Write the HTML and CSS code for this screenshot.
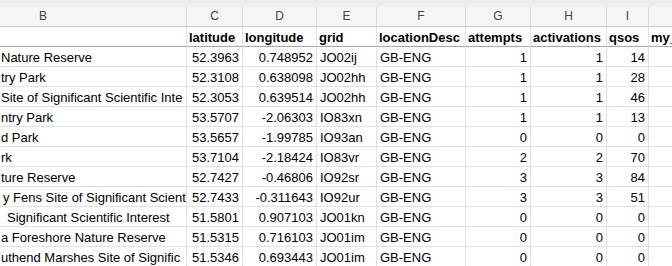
FILE: index.html
```html
<!DOCTYPE html>
<html>
	<head>
		<meta charset="UTF-8">
		<title>parks</title>
		<link rel="stylesheet" href="styles.css">
	</head>
	<body>
		<div class="topbar"></div>
		<div class="sheet">
			<!-- column letters -->
			<div class="col colb">B</div>
			<div class="col">C</div>
			<div class="col">D</div>
			<div class="col">E</div>
			<div class="col">F</div>
			<div class="col">G</div>
			<div class="col">H</div>
			<div class="col">I</div>
			<div class="col last"></div>

			<!-- header row -->
			<div class="cell head name"></div>
			<div class="cell head">latitude</div>
			<div class="cell head">longitude</div>
			<div class="cell head">grid</div>
			<div class="cell head">locationDesc</div>
			<div class="cell head">attempts</div>
			<div class="cell head">activations</div>
			<div class="cell head">qsos</div>
			<div class="cell head last">my_</div>

			<div class="cell name">Nature Reserve</div>
			<div class="cell num">52.3963</div>
			<div class="cell num">0.748952</div>
			<div class="cell">JO02ij</div>
			<div class="cell">GB-ENG</div>
			<div class="cell num">1</div>
			<div class="cell num">1</div>
			<div class="cell num">14</div>
			<div class="cell last"></div>

			<div class="cell name">try Park</div>
			<div class="cell num">52.3108</div>
			<div class="cell num">0.638098</div>
			<div class="cell">JO02hh</div>
			<div class="cell">GB-ENG</div>
			<div class="cell num">1</div>
			<div class="cell num">1</div>
			<div class="cell num">28</div>
			<div class="cell last"></div>

			<div class="cell name">Site of Significant Scientific Inte</div>
			<div class="cell num">52.3053</div>
			<div class="cell num">0.639514</div>
			<div class="cell">JO02hh</div>
			<div class="cell">GB-ENG</div>
			<div class="cell num">1</div>
			<div class="cell num">1</div>
			<div class="cell num">46</div>
			<div class="cell last"></div>

			<div class="cell name">ntry Park</div>
			<div class="cell num">53.5707</div>
			<div class="cell num">-2.06303</div>
			<div class="cell">IO83xn</div>
			<div class="cell">GB-ENG</div>
			<div class="cell num">1</div>
			<div class="cell num">1</div>
			<div class="cell num">13</div>
			<div class="cell last"></div>

			<div class="cell name">d Park</div>
			<div class="cell num">53.5657</div>
			<div class="cell num">-1.99785</div>
			<div class="cell">IO93an</div>
			<div class="cell">GB-ENG</div>
			<div class="cell num">0</div>
			<div class="cell num">0</div>
			<div class="cell num">0</div>
			<div class="cell last"></div>

			<div class="cell name">rk</div>
			<div class="cell num">53.7104</div>
			<div class="cell num">-2.18424</div>
			<div class="cell">IO83vr</div>
			<div class="cell">GB-ENG</div>
			<div class="cell num">2</div>
			<div class="cell num">2</div>
			<div class="cell num">70</div>
			<div class="cell last"></div>

			<div class="cell name">ture Reserve</div>
			<div class="cell num">52.7427</div>
			<div class="cell num">-0.46806</div>
			<div class="cell">IO92sr</div>
			<div class="cell">GB-ENG</div>
			<div class="cell num">3</div>
			<div class="cell num">3</div>
			<div class="cell num">84</div>
			<div class="cell last"></div>

			<div class="cell name in3">y Fens Site of Significant Scient</div>
			<div class="cell num">52.7433</div>
			<div class="cell num">-0.311643</div>
			<div class="cell">IO92ur</div>
			<div class="cell">GB-ENG</div>
			<div class="cell num">3</div>
			<div class="cell num">3</div>
			<div class="cell num">51</div>
			<div class="cell last"></div>

			<div class="cell name in7">Significant Scientific Interest</div>
			<div class="cell num">51.5801</div>
			<div class="cell num">0.907103</div>
			<div class="cell">JO01kn</div>
			<div class="cell">GB-ENG</div>
			<div class="cell num">0</div>
			<div class="cell num">0</div>
			<div class="cell num">0</div>
			<div class="cell last"></div>

			<div class="cell name">a Foreshore Nature Reserve</div>
			<div class="cell num">51.5315</div>
			<div class="cell num">0.716103</div>
			<div class="cell">JO01im</div>
			<div class="cell">GB-ENG</div>
			<div class="cell num">0</div>
			<div class="cell num">0</div>
			<div class="cell num">0</div>
			<div class="cell last"></div>

			<div class="cell name">uthend Marshes Site of Signific</div>
			<div class="cell num">51.5346</div>
			<div class="cell num">0.693443</div>
			<div class="cell">JO01im</div>
			<div class="cell">GB-ENG</div>
			<div class="cell num">0</div>
			<div class="cell num">0</div>
			<div class="cell num">0</div>
			<div class="cell last"></div>
		</div>
	</body>
</html>
```

FILE: styles.css
```css
*{
	margin: 0;
	padding: 0;
	box-sizing: border-box;
}
html,body{
	width: 672px;
	height: 266px;
	overflow: hidden;
	background-color: #fff;
}
body{
	font-family: "Liberation Sans", Arial, sans-serif;
	font-size: 13px;
	color: #000;
}
.topbar{
	height: 7px;
	background-color: #eceef1;
}
.sheet{
	display: grid;
	grid-template-columns: 187px 56px 74px 60px 89px 65px 76px 42px 1fr;
	grid-auto-rows: 20px;
}
/* column letters */
.col{
	background-color: #f5f5f5;
	border-right: 1px solid #dadada;
	border-bottom: 1px solid #c8c8c8;
	text-align: center;
	font-size: 12px;
	line-height: 19px;
	color: #444;
}
.colb{
	text-align: left;
	padding-left: 39px;
}
.cell{
	border-right: 1px solid #e1e1e1;
	border-bottom: 1px solid #e1e1e1;
	padding: 2px 3px 0 3px;
	line-height: 17px;
	white-space: nowrap;
	overflow: hidden;
}
.head{
	font-weight: bold;
	border-bottom: 1px solid #a6a6a6;
	padding-left: 2px;
}
.num{
	text-align: right;
}
.name{
	padding-left: 1px;
}
.in3{
	padding-left: 3px;
}
.in7{
	padding-left: 7px;
}
.last{
	border-right: none;
}
```
